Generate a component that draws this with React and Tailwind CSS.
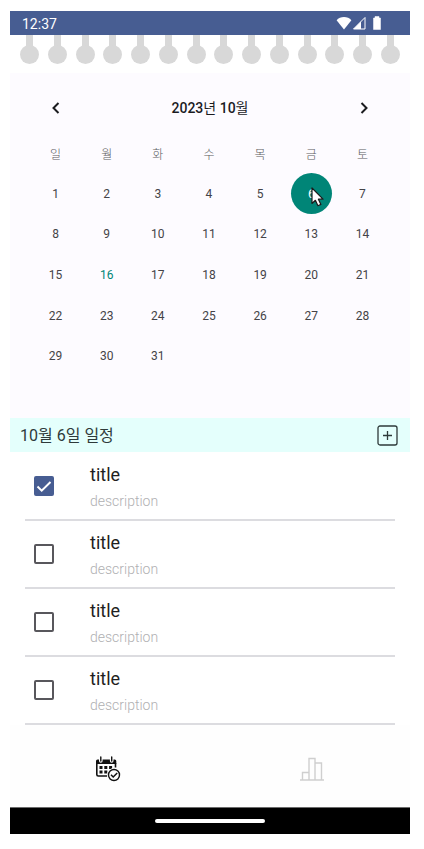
import React, { useState } from 'react';

const WEEKDAYS = ['일', '월', '화', '수', '목', '금', '토'];
const DAYS = Array.from({ length: 31 }, (_, i) => i + 1);
const TODAY = 16;

const initialTodos = [
  { id: 1, title: 'title', description: 'description', done: true },
  { id: 2, title: 'title', description: 'description', done: false },
  { id: 3, title: 'title', description: 'description', done: false },
  { id: 4, title: 'title', description: 'description', done: false },
];

function StatusBar() {
  return (
    <div className="flex h-6 items-center justify-between bg-[#475d92] pl-3 pr-7 text-white">
      <span className="pt-px text-sm">12:37</span>
      <div className="flex items-center">
        <svg width="16" height="14" viewBox="0 0 16 14" fill="currentColor">
          <path d="M8 13.500 0.600 4.200C2.500 2.200 5 1 8 1s5.500 1.200 7.400 3.200z" />
        </svg>
        <svg width="14" height="14" viewBox="0 0 14 14" fill="none" stroke="currentColor">
          <path d="M13 1.500V13H1.500z" strokeWidth="1" />
          <path d="M9 5.500V13H1.500z" fill="currentColor" stroke="none" />
        </svg>
        <svg className="ml-1.5" width="10" height="14" viewBox="0 0 10 14" fill="currentColor">
          <path d="M3 0.500h4V2h1.500v11.500h-7V2H3z" stroke="currentColor" strokeWidth="0.500" strokeLinejoin="round" />
        </svg>
      </div>
    </div>
  );
}

function Rings() {
  return (
    <div className="flex h-[38px] justify-between bg-white px-2.5">
      {Array.from({ length: 14 }).map((_, i) => (
        <div key={i} className="flex w-[19px] flex-col items-center">
          <div className="h-3 w-[7px] bg-[#d8d8d8]" />
          <div className="-mt-0.5 h-[19px] w-[19px] rounded-full bg-[#d8d8d8]" />
        </div>
      ))}
    </div>
  );
}

function Cursor() {
  return (
    <svg className="pointer-events-none absolute left-5 top-3.5" width="14" height="20" viewBox="0 0 14 20">
      <path
        d="M1 1v15.500l3.400-3.200 2.500 5.400 3-1.300-2.500-5.200H12z"
        fill="#fff"
        stroke="#1b1b1b"
        strokeWidth="1.200"
        strokeLinejoin="round"
      />
    </svg>
  );
}

function Calendar({ selected, onSelect }) {
  const getDayColor = (day) => {
    if (day === selected) return 'bg-[#008577] text-white';
    if (day === TODAY) return 'text-[#008577]';
    return 'text-[#444347]';
  };

  return (
    <section className="bg-[#fdfbff] pb-[42px] pl-5 pr-[22px] pt-[15px]">
      <div className="flex h-10 items-center justify-between pl-4 pr-3.5 text-[#1b1b1f]">
        <button type="button" aria-label="이전 달" className="flex h-5 w-5 items-center justify-center">
          <svg width="20" height="20" viewBox="0 0 20 20" fill="none" stroke="currentColor" strokeWidth="2">
            <path d="M12.500 5 7.500 10l5 5" />
          </svg>
        </button>
        <h1 className="text-sm font-medium">
          2023<span className="font-normal">년</span> 10<span className="font-normal">월</span>
        </h1>
        <button type="button" aria-label="다음 달" className="flex h-5 w-5 items-center justify-center">
          <svg width="20" height="20" viewBox="0 0 20 20" fill="none" stroke="currentColor" strokeWidth="2">
            <path d="M7.500 5l5 5-5 5" />
          </svg>
        </button>
      </div>

      <div className="mt-2 grid h-[37px] grid-cols-7 items-center text-center text-xs font-light text-[#5c5b60]">
        {WEEKDAYS.map((name) => (
          <span key={name}>{name}</span>
        ))}
      </div>

      <div className="grid h-[203px] grid-cols-7 grid-rows-5 items-center justify-items-center">
        {DAYS.map((day) => (
          <div key={day} className="relative">
            <button
              type="button"
              onClick={() => onSelect(day)}
              className={`h-[41px] w-[41px] rounded-full pt-px text-xs ${getDayColor(day)}`}
            >
              {day}
            </button>
            {day === 6 && <Cursor />}
          </div>
        ))}
      </div>
    </section>
  );
}

function TodoItem({ todo, onToggle }) {
  const inputId = `todo-${todo.id}`;

  return (
    <li className="flex h-[68px] items-center border-b-2 border-[#dcdce0] pl-[9px]">
      <div className="grid h-5 w-5 place-items-center">
        <input
          id={inputId}
          type="checkbox"
          checked={todo.done}
          onChange={() => onToggle(todo.id)}
          className="col-start-1 row-start-1 h-5 w-5 appearance-none rounded-[2px] border-2 border-[#58575c] checked:border-[#475d92] checked:bg-[#475d92]"
        />
        {todo.done && (
          <svg className="pointer-events-none col-start-1 row-start-1" width="20" height="20" viewBox="0 0 20 20" fill="none" stroke="#fff" strokeWidth="2">
            <path d="M3.500 10.500l4.200 4.200L16.500 6" />
          </svg>
        )}
      </div>
      <label htmlFor={inputId} className="ml-9 flex flex-col gap-1 pt-0.5">
        <span className="text-lg leading-6 text-[#1f1f22]">{todo.title}</span>
        <span className="text-sm font-light leading-5 text-[#b0b0b2]">{todo.description}</span>
      </label>
    </li>
  );
}

function BottomNav() {
  return (
    <nav className="grid h-[82px] grid-cols-2 gap-2 bg-[#fefefe] pt-1.5">
      <button type="button" aria-label="일정" className="flex items-center justify-center text-[#111]">
        <svg width="26" height="26" viewBox="0 0 26 26" fill="none">
          <path d="M2.500 3.500H4V5a1.800 1.800 0 0 0 3.600 0V3.500h7.300V5a1.800 1.800 0 0 0 3.600 0V3.500h1.300a1.500 1.500 0 0 1 1.500 1.500v3H1V5a1.500 1.500 0 0 1 1.500-1.500z" fill="currentColor" />
          <path d="M5.800 1v4M16.700 1v4" stroke="currentColor" strokeWidth="1.400" strokeLinecap="round" />
          <path d="M1.800 7v11.500a1.500 1.500 0 0 0 1.500 1.500h9M20.500 7v4.500" stroke="currentColor" strokeWidth="1.600" />
          <path d="M4.500 10h3v3h-3zM9.300 10h3v3h-3zM14.100 10h3v3h-3zM4.500 14.400h3v3h-3zM9.300 14.400h3v3h-3z" fill="currentColor" />
          <circle cx="19" cy="19" r="7" fill="#fefefe" />
          <circle cx="19" cy="19" r="5.500" stroke="currentColor" strokeWidth="1.400" />
          <path d="M16 18.800l2.200 2.200 4-4" stroke="currentColor" strokeWidth="1.500" />
        </svg>
      </button>
      <button type="button" aria-label="통계" className="flex items-center justify-center text-[#cfcfcf]">
        <svg width="26" height="26" viewBox="0 0 26 26" fill="none" stroke="currentColor" strokeWidth="1.400">
          <path d="M1 24h24M3.500 24v-7.500H10M10 24V2.500h6V24M16 7h6.500v17" />
        </svg>
      </button>
    </nav>
  );
}

export default function App() {
  const [selected, setSelected] = useState(6);
  const [todos, setTodos] = useState(initialTodos);

  const toggle = (id) => {
    setTodos(todos.map((t) => (t.id === id ? { ...t, done: !t.done } : t)));
  };

  return (
    <div className="bg-white pb-[15px] pl-2.5 pr-3.5 pt-[11px] font-[Roboto,'Noto_Sans_CJK_KR',sans-serif]">
      <StatusBar />
      <Rings />
      <Calendar selected={selected} onSelect={setSelected} />

      <div className="flex h-[34px] items-center justify-between bg-[#e4fffc] pl-2.5 pr-3 text-[#2e3a3a]">
        <h2 className="pt-px text-base">10월 {selected}일 일정</h2>
        <button type="button" aria-label="일정 추가">
          <svg width="21" height="21" viewBox="0 0 21 21" fill="none" stroke="currentColor">
            <rect x="1" y="1" width="19" height="19" rx="2" strokeWidth="1.300" />
            <path d="M10.500 6v9M6 10.500h9" strokeWidth="1.300" />
          </svg>
        </button>
      </div>

      <ul className="mx-[15px] pt-px">
        {todos.map((todo) => (
          <TodoItem key={todo.id} todo={todo} onToggle={toggle} />
        ))}
      </ul>

      <BottomNav />

      <div className="flex h-[27px] items-center justify-center border-t border-[#6b6b6b] bg-black">
        <div className="h-1 w-[110px] rounded-full bg-white" />
      </div>
    </div>
  );
}
